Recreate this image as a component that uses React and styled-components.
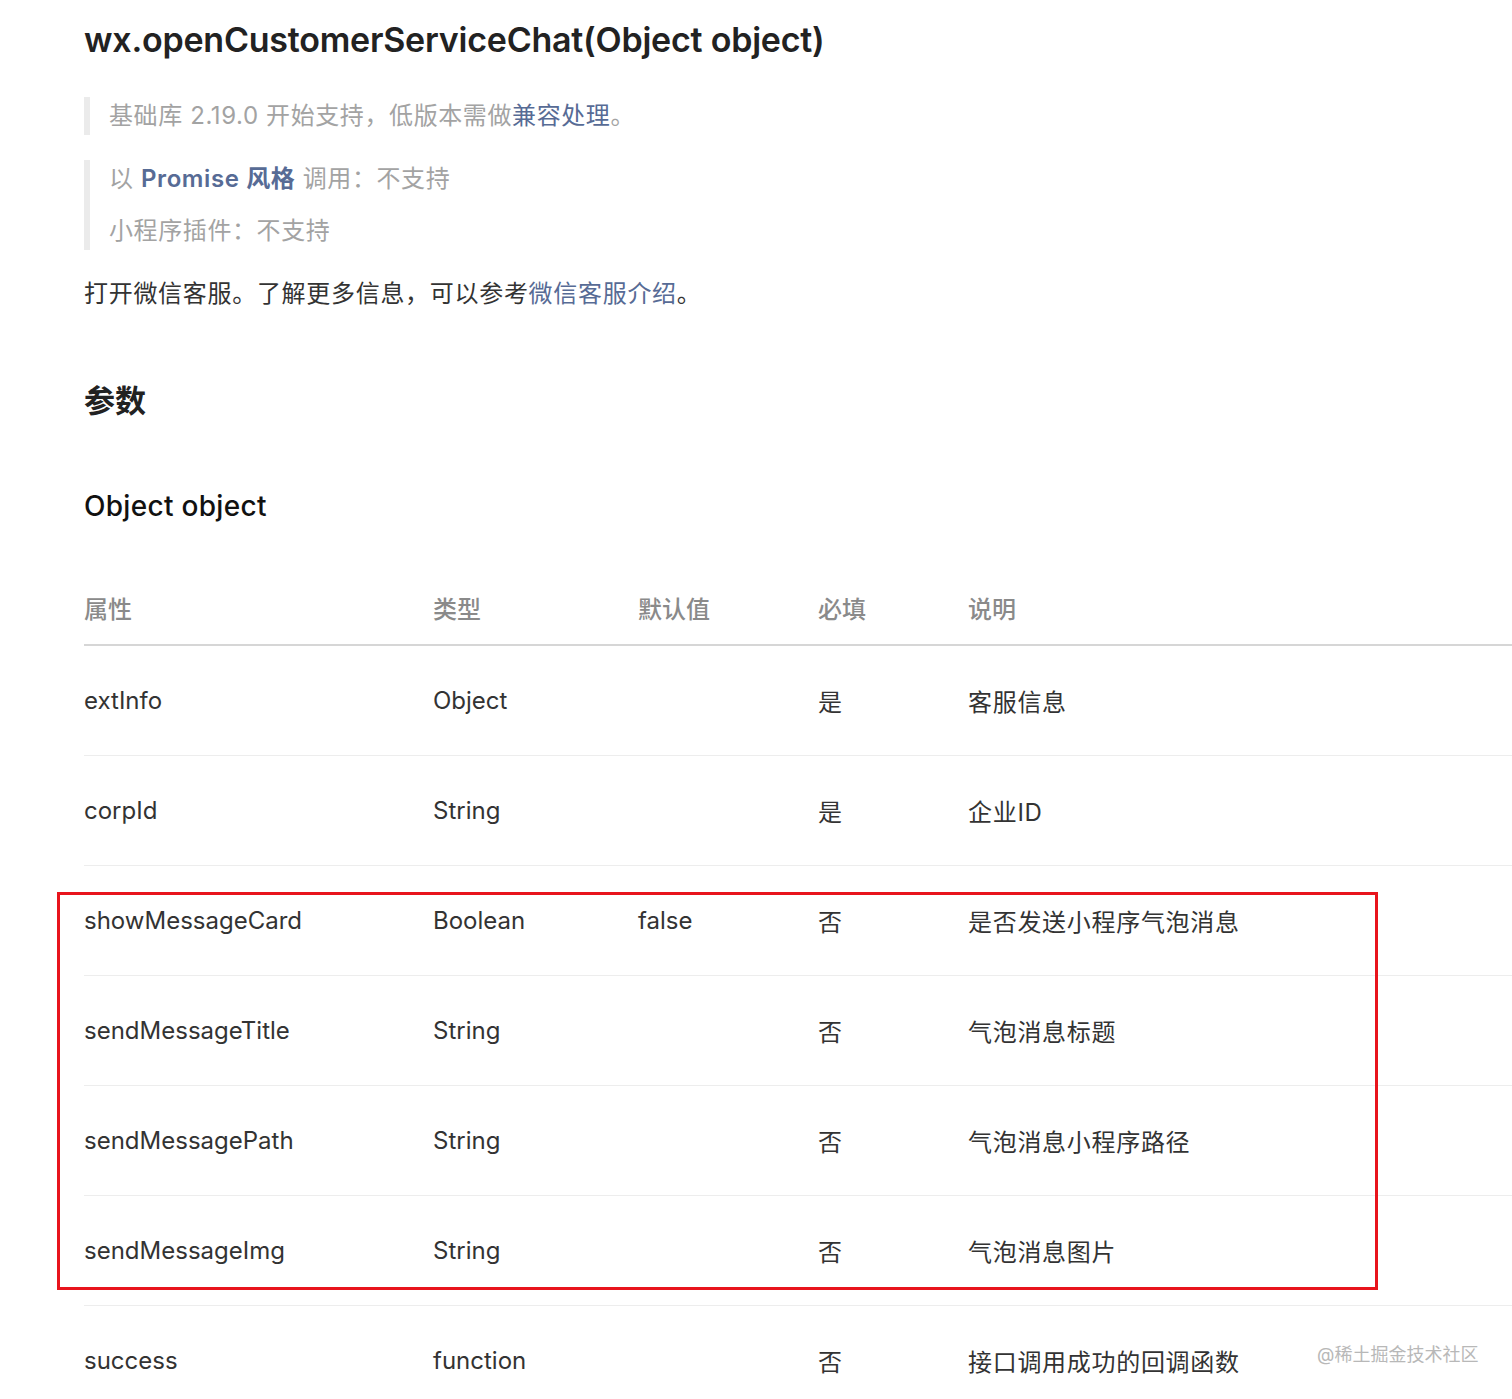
import React from "react";
import styled, { createGlobalStyle } from "styled-components";

const Global = createGlobalStyle`
  html, body { margin: 0; padding: 0; background: #fff; overflow-x: hidden; }
  body { font-family: "Inter", "Noto Sans CJK SC", sans-serif; color: #333; }
`;

const Page = styled.div`
  position: relative;
  padding: 16px 0 0 84px;
  height: 1399px;
  box-sizing: border-box;
  overflow: hidden;
`;

const Title = styled.h1`
  margin: 0;
  font-size: 34px;
  line-height: 48px;
  font-weight: 600;
  color: #222;
  letter-spacing: -0.23px;
`;

const Quote = styled.blockquote`
  margin: ${(p) => p.$top}px 0 0 0;
  padding: 0 0 0 19px;
  border-left: 6px solid #ebebeb;
  display: flex;
  flex-direction: column;
  gap: 14px;
`;

const QuoteLine = styled.p`
  margin: 0;
  font-size: 24px;
  line-height: 38px;
  color: #a3a3a3;
  letter-spacing: 0.6px;
`;

const Link = styled.a`
  color: #576b95;
  text-decoration: none;
  font-weight: ${(p) => (p.$bold ? 600 : 400)};
`;

const Para = styled.p`
  margin: 25px 0 0 0;
  font-size: 24px;
  line-height: 38px;
  color: #333;
  letter-spacing: 0.7px;
`;

const H2 = styled.h2`
  margin: 67px 0 0 0;
  font-size: 31px;
  line-height: 42px;
  font-weight: 600;
  color: #222;
`;

const H3 = styled.h3`
  margin: 64px 0 0 0;
  font-size: 28px;
  line-height: 40px;
  font-weight: 500;
  color: #111;
  letter-spacing: 0.3px;
`;

const Table = styled.table`
  margin-top: 45px;
  width: 1480px;
  border-collapse: collapse;
  table-layout: fixed;
`;

const Th = styled.th`
  text-align: left;
  font-size: 24px;
  font-weight: 500;
  color: #8a8a8a;
  height: 73px;
  padding: 0;
  vertical-align: middle;
  border-bottom: 2px solid #d6d6d6;
`;

const Td = styled.td`
  font-size: 24px;
  color: #333;
  height: 109px;
  padding: 0;
  vertical-align: middle;
  border-bottom: 1px solid #ededed;
  letter-spacing: ${(p) => (p.$cjk ? "0.7px" : "0")};
`;

const Highlight = styled.div`
  position: absolute;
  left: 57px;
  top: 892px;
  width: 1321px;
  height: 398px;
  box-sizing: border-box;
  border: 3px solid #e8141c;
  pointer-events: none;
`;

const Watermark = styled.div`
  position: absolute;
  left: 1317px;
  top: 1342px;
  font-size: 18px;
  line-height: 26px;
  color: #b8b8b8;
  white-space: nowrap;
`;

const rows = [
  ["extInfo", "Object", "", "是", "客服信息"],
  ["corpId", "String", "", "是", "企业ID"],
  ["showMessageCard", "Boolean", "false", "否", "是否发送小程序气泡消息"],
  ["sendMessageTitle", "String", "", "否", "气泡消息标题"],
  ["sendMessagePath", "String", "", "否", "气泡消息小程序路径"],
  ["sendMessageImg", "String", "", "否", "气泡消息图片"],
  ["success", "function", "", "否", "接口调用成功的回调函数"],
];

export default function App() {
  return (
    <>
      <Global />
      <Page>
        <Title>wx.openCustomerServiceChat(Object object)</Title>
        <Quote $top={33}>
          <QuoteLine>
            基础库 2.19.0 开始支持，低版本需做<Link href="#">兼容处理</Link>。
          </QuoteLine>
        </Quote>
        <Quote $top={25}>
          <QuoteLine>
            以 <Link href="#" $bold>Promise 风格</Link> 调用：不支持
          </QuoteLine>
          <QuoteLine>小程序插件：不支持</QuoteLine>
        </Quote>
        <Para>
          打开微信客服。了解更多信息，可以参考<Link href="#">微信客服介绍</Link>。
        </Para>
        <H2>参数</H2>
        <H3>Object object</H3>
        <Table>
          <colgroup>
            <col style={{ width: 349 }} />
            <col style={{ width: 205 }} />
            <col style={{ width: 180 }} />
            <col style={{ width: 150 }} />
            <col />
          </colgroup>
          <thead>
            <tr>
              <Th>属性</Th>
              <Th>类型</Th>
              <Th>默认值</Th>
              <Th>必填</Th>
              <Th>说明</Th>
            </tr>
          </thead>
          <tbody>
            {rows.map((r) => (
              <tr key={r[0]}>
                {r.map((c, i) => (
                  <Td key={i} $cjk={i === 4}>{c}</Td>
                ))}
              </tr>
            ))}
          </tbody>
        </Table>
        <Highlight />
        <Watermark>@稀土掘金技术社区</Watermark>
      </Page>
    </>
  );
}
